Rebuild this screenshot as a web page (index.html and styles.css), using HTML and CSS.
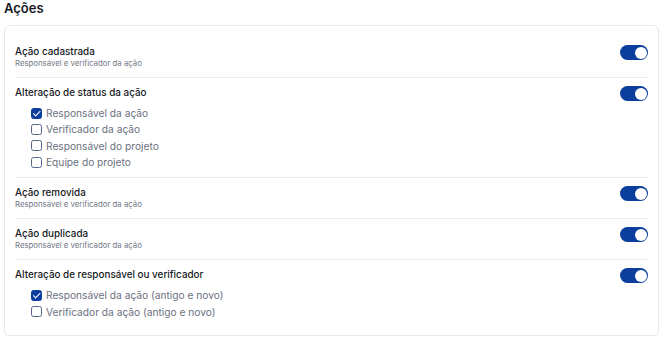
FILE: index.html
```html
<!DOCTYPE html>
<html lang="pt-BR">

<head>
    <meta charset="UTF-8">
    <meta name="viewport" content="width=device-width, initial-scale=1.0">
    <title>Notificações - Ações</title>
    <link rel="stylesheet" href="styles.css">
</head>

<body>
    <h2 class="section-title">Ações</h2>

    <div class="card">
        <div class="row">
            <div class="row-head">
                <div>
                    <div class="row-title">Ação cadastrada</div>
                    <div class="row-sub">Responsável e verificador da ação</div>
                </div>
                <span class="toggle on"></span>
            </div>
        </div>

        <div class="row">
            <div class="row-head">
                <div class="row-title">Alteração de status da ação</div>
                <span class="toggle on"></span>
            </div>
            <ul class="checks">
                <li><span class="box checked"></span>Responsável da ação</li>
                <li><span class="box"></span>Verificador da ação</li>
                <li><span class="box"></span>Responsável do projeto</li>
                <li><span class="box"></span>Equipe do projeto</li>
            </ul>
        </div>

        <div class="row">
            <div class="row-head">
                <div>
                    <div class="row-title">Ação removida</div>
                    <div class="row-sub">Responsável e verificador da ação</div>
                </div>
                <span class="toggle on"></span>
            </div>
        </div>

        <div class="row">
            <div class="row-head">
                <div>
                    <div class="row-title">Ação duplicada</div>
                    <div class="row-sub">Responsável e verificador da ação</div>
                </div>
                <span class="toggle on"></span>
            </div>
        </div>

        <div class="row">
            <div class="row-head">
                <div class="row-title">Alteração de responsável ou verificador</div>
                <span class="toggle on"></span>
            </div>
            <ul class="checks">
                <li><span class="box checked"></span>Responsável da ação (antigo e novo)</li>
                <li><span class="box"></span>Verificador da ação (antigo e novo)</li>
            </ul>
        </div>
    </div>
</body>

</html>
```

FILE: styles.css
```css
body {
    margin: 0;
    padding: 0 11px 0 4px;
    font-family: Inter, "Noto Sans", sans-serif;
    background-color: #ffffff;
    color: #161a24;
}
.section-title {
    margin: 0;
    height: 25px;
    line-height: 17px;
    font-size: 13px;
    font-weight: 600;
    color: #161a24;
}
.card {
    border: 1px solid #e6e8ec;
    border-radius: 6px;
    padding: 11px 10px 8px;
    box-shadow: 0 1px 2px rgba(16, 24, 40, 0.03);
}
.row {
    padding: 8px 0;
    border-bottom: 1px solid #eceef1;
}
.row:last-child {
    border-bottom: none;
}
.row-head {
    display: flex;
    align-items: flex-start;
    justify-content: space-between;
}
.row-title {
    font-size: 9.9px;
    font-weight: 500;
    line-height: 13px;
    color: #161a24;
}
.row-sub {
    font-size: 7.8px;
    line-height: 11px;
    color: #727886;
}
.toggle {
    position: relative;
    width: 28px;
    height: 15px;
    margin: 0 0 -2px;
    border-radius: 8px;
    background-color: #cfd4dc;
}
.toggle.on {
    background-color: #0c3e9e;
}
.toggle::after {
    content: "";
    position: absolute;
    top: 1.5px;
    left: 1.5px;
    width: 12px;
    height: 12px;
    border-radius: 50%;
    background-color: #ffffff;
}
.toggle.on::after {
    left: 14.5px;
}
.checks {
    list-style: none;
    margin: 7px 0 0;
    padding: 0 0 0 16px;
    display: flex;
    flex-direction: column;
    gap: 2.45px;
}
.checks li {
    display: flex;
    align-items: center;
    height: 14px;
    font-size: 10.2px;
    color: #6b7180;
}
.box {
    position: relative;
    box-sizing: border-box;
    width: 11px;
    height: 11px;
    margin-right: 4px;
    border: 1px solid #56648a;
    border-radius: 2.5px;
}
.box.checked {
    background-color: #0c3e9e;
    border-color: #0c3e9e;
}
.box.checked::after {
    content: "";
    position: absolute;
    left: 3px;
    top: 0.5px;
    width: 2.5px;
    height: 5.5px;
    border: solid #ffffff;
    border-width: 0 1.5px 1.5px 0;
    transform: rotate(45deg);
}
```
